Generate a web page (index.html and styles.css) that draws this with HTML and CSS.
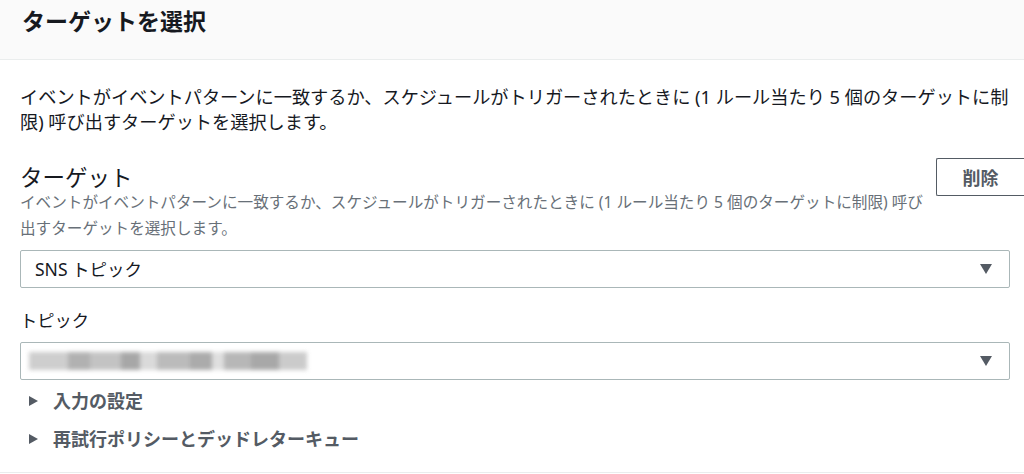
FILE: index.html
```html
<!DOCTYPE html>
<html lang="ja">
<head>
<meta charset="utf-8">
<title>ターゲットを選択</title>
<link rel="stylesheet" href="styles.css">
</head>
<body>
<div class="page">
  <header class="panel-header">
    <h2 class="panel-title">ターゲットを選択</h2>
  </header>
  <section class="panel-body">
    <p class="intro">イベントがイベントパターンに一致するか、スケジュールがトリガーされたときに (1 ルール当たり 5 個のターゲットに制限) 呼び出すターゲットを選択します。</p>
    <div class="target-row">
      <div class="target-head">
        <h3 class="target-title">ターゲット</h3>
        <p class="target-desc">イベントがイベントパターンに一致するか、スケジュールがトリガーされたときに (1 ルール当たり 5 個のターゲットに制限) 呼び出すターゲットを選択します。</p>
      </div>
      <button class="btn-remove" type="button">削除</button>
    </div>
    <div class="select">
      <span class="select-value">SNS トピック</span>
      <span class="caret"></span>
    </div>
    <div class="field-label">トピック</div>
    <div class="select">
      <span class="blurred"></span>
      <span class="caret"></span>
    </div>
    <div class="expander"><span class="tri"></span><span class="exp-text">入力の設定</span></div>
    <div class="expander second"><span class="tri"></span><span class="exp-text">再試行ポリシーとデッドレターキュー</span></div>
  </section>
  <div class="bottom-rule"></div>
</div>
</body>
</html>
```

FILE: styles.css
```css
* { box-sizing: border-box; }
html, body {
  margin: 0;
  padding: 0;
  background: #ffffff;
  overflow: hidden;
}
body {
  font-family: "Noto Sans", "Noto Sans CJK JP", sans-serif;
  color: #16191f;
  width: 1024px;
  height: 474px;
}
.page {
  width: 1024px;
}
.panel-header {
  height: 60px;
  background: #fafafa;
  border-bottom: 1px solid #eaeded;
  padding: 4px 22px 0;
}
.panel-title {
  margin: 0;
  font-size: 23px;
  line-height: 35px;
  font-weight: 700;
  color: #16191f;
}
.panel-body {
  padding: 25px 14px 0 20px;
}
.intro {
  margin: 0 0 23px 0;
  font-size: 18.2px;
  line-height: 25px;
  color: #16191f;
}
.target-row {
  display: flex;
  align-items: flex-start;
  gap: 12px;
  margin-right: -14px;
}
.target-head {
  flex: 1;
  padding-top: 9px;
}
.target-title {
  margin: 0;
  font-size: 22.5px;
  line-height: 22px;
  font-weight: 400;
  color: #16191f;
}
.target-desc {
  margin: 0;
  font-size: 15.6px;
  line-height: 26px;
  color: #687078;
}
.btn-remove {
  flex: none;
  width: 88px;
  height: 38px;
  margin: 0;
  padding: 0;
  background: #ffffff;
  border: 1px solid #545b64;
  border-right: 0;
  border-radius: 2px 0 0 2px;
  font-family: "Noto Sans", "Noto Sans CJK JP", sans-serif;
  font-size: 18px;
  font-weight: 700;
  color: #545b64;
  text-align: center;
}
.select {
  display: flex;
  align-items: center;
  justify-content: space-between;
  height: 38px;
  margin-top: 9px;
  border: 1px solid #aab7b8;
  border-radius: 2px;
  padding: 0 17px 0 14px;
  background: #ffffff;
}
.select-value {
  font-size: 17.5px;
  line-height: 24px;
  color: #16191f;
}
.caret {
  width: 0;
  height: 0;
  border-left: 6.5px solid transparent;
  border-right: 6.5px solid transparent;
  border-top: 10px solid #545b64;
}
.field-label {
  margin-top: 22px;
  font-size: 17.3px;
  line-height: 22px;
  color: #16191f;
}
.field-label + .select {
  margin-top: 10px;
}
.blurred {
  display: block;
  width: 278px;
  height: 18px;
  margin-left: -6px;
  background:
    linear-gradient(90deg,
      #c9c9c9 0 14%, #a9a9a9 14% 22%, #bdbdbd 22% 33%, #9e9e9e 33% 40%,
      #d6d6d6 40% 46%, #b4b4b4 46% 58%, #a2a2a2 58% 66%, #dcdcdc 66% 70%,
      #b0b0b0 70% 80%, #9f9f9f 80% 90%, #c6c6c6 90% 100%);
  filter: blur(2px);
  opacity: 0.9;
}
.expander {
  display: flex;
  align-items: center;
  gap: 15px;
  height: 24px;
  margin-top: 9px;
  padding-left: 9px;
}
.expander.second {
  margin-top: 14px;
}
.tri {
  width: 0;
  height: 0;
  border-top: 5.5px solid transparent;
  border-bottom: 5.5px solid transparent;
  border-left: 9px solid #545b64;
}
.exp-text {
  font-size: 18px;
  line-height: 24px;
  font-weight: 700;
  color: #545b64;
}
.bottom-rule {
  margin-top: 21px;
  height: 1px;
  background: #eaeded;
}
```
